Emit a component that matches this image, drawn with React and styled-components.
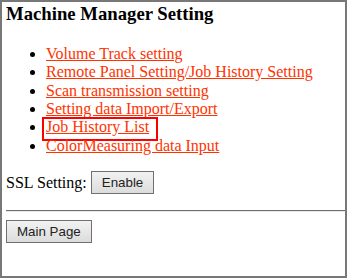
import React from "react";
import styled, { createGlobalStyle } from "styled-components";

const Global = createGlobalStyle`
  html, body { margin: 0; padding: 0; background: #fff; }
  body { font-family: "Liberation Serif", "Times New Roman", serif; font-size: 16px; color: #000; }
`;

const Frame = styled.div`
  box-sizing: border-box;
  width: 347px;
  height: 278px;
  border: 2px solid #787878;
  padding: 1px 0 0 4px;
  overflow: hidden;
`;

const Title = styled.h3`
  font-size: 18.72px;
  font-weight: bold;
  margin: 0 0 19.7px 0;
`;

const Menu = styled.ul`
  margin: 0 0 16px 0;
  padding-left: 40px;
  list-style: disc;
`;

const Item = styled.li`
  position: relative;
  line-height: 18.4px;
  color: #000;
  &::marker { color: #000; }
`;

const Link = styled.a`
  color: #ff3300;
  text-decoration: underline;
  cursor: pointer;
`;

const Highlight = styled.span`
  position: absolute;
  left: -4px;
  top: -1px;
  width: 116px;
  height: 24px;
  box-sizing: border-box;
  border: 2px solid #ff0000;
  pointer-events: none;
`;

const Row = styled.p`
  margin: 0;
  display: flex;
  align-items: center;
  gap: 4px;
`;

const Button = styled.button`
  box-sizing: border-box;
  font-family: "Liberation Sans", Arial, sans-serif;
  font-size: 13.33px;
  color: #222;
  height: 23px;
  padding: 0 10px;
  border: 1px solid #707070;
  border-radius: 0;
  background: linear-gradient(#f2f2f2, #dcdcdc);
  cursor: pointer;
`;

const Rule = styled.hr`
  margin: 16px 0 8px 0;
  border: none;
  border-top: 1px solid #6e6e6e;
  border-bottom: 1px solid #e8e8e8;
  height: 0;
`;

const links = [
  "Volume Track setting",
  "Remote Panel Setting/Job History Setting",
  "Scan transmission setting",
  "Setting data Import/Export",
  "Job History List",
  "ColorMeasuring data Input",
];

export default function App() {
  return (
    <>
      <Global />
      <Frame>
        <Title>Machine Manager Setting</Title>
        <Menu>
          {links.map((l) => (
            <Item key={l}>
              <Link>{l}</Link>
              {l === "Job History List" && <Highlight />}
            </Item>
          ))}
        </Menu>
        <Row>
          SSL Setting: <Button>Enable</Button>
        </Row>
        <Rule />
        <Button>Main Page</Button>
      </Frame>
    </>
  );
}
